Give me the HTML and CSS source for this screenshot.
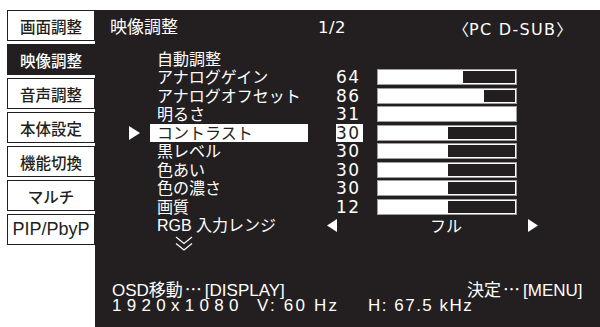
FILE: index.html
```html
<!DOCTYPE html>
<html lang="ja">
<head>
<meta charset="utf-8">
<title>映像調整</title>
<link rel="stylesheet" href="styles.css">
</head>
<body>
<div class="screen">
  <nav class="tabs">
    <div class="tab">画面調整</div>
    <div class="tab active">映像調整</div>
    <div class="tab">音声調整</div>
    <div class="tab">本体設定</div>
    <div class="tab">機能切換</div>
    <div class="tab">マルチ</div>
    <div class="tab latin">PIP/PbyP</div>
  </nav>
  <main class="panel">
    <header class="head">
      <span class="title">映像調整</span>
      <span class="page">1/2</span>
      <span class="src"><span class="br">〈</span>PC D-SUB<span class="br">〉</span></span>
    </header>
    <ul class="list">
      <li class="row"><span class="mark"></span><span class="label">自動調整</span></li>
      <li class="row"><span class="mark"></span><span class="label">アナログゲイン</span><span class="val">64</span><span class="bar"><span class="fill" style="width:61.5%"></span><span class="rest"></span></span></li>
      <li class="row"><span class="mark"></span><span class="label">アナログオフセット</span><span class="val">86</span><span class="bar"><span class="fill" style="width:77%"></span><span class="rest"></span></span></li>
      <li class="row"><span class="mark"></span><span class="label">明るさ</span><span class="val">31</span><span class="bar"><span class="fill" style="width:100%"></span><span class="rest"></span></span></li>
      <li class="row sel"><span class="mark"><svg class="arrow" width="11" height="14" viewBox="0 0 11 14"><polygon points="0,0 11,7 0,14" fill="#fff"/></svg></span><span class="label">コントラスト</span><span class="val">30</span><span class="bar"><span class="fill" style="width:51%"></span><span class="rest"></span></span></li>
      <li class="row"><span class="mark"></span><span class="label">黒レベル</span><span class="val">30</span><span class="bar"><span class="fill" style="width:51%"></span><span class="rest"></span></span></li>
      <li class="row"><span class="mark"></span><span class="label">色あい</span><span class="val">30</span><span class="bar"><span class="fill" style="width:51%"></span><span class="rest"></span></span></li>
      <li class="row"><span class="mark"></span><span class="label">色の濃さ</span><span class="val">30</span><span class="bar"><span class="fill" style="width:51%"></span><span class="rest"></span></span></li>
      <li class="row"><span class="mark"></span><span class="label">画質</span><span class="val">12</span><span class="bar"><span class="fill" style="width:51%"></span><span class="rest"></span></span></li>
      <li class="row"><span class="mark"></span><span class="label">RGB 入力レンジ</span>
        <span class="range">
          <svg class="tri" width="10" height="13" viewBox="0 0 10 13"><polygon points="10,0 0,6.5 10,13" fill="#fff"/></svg>
          <span class="opt">フル</span>
          <svg class="tri right" width="10" height="13" viewBox="0 0 10 13"><polygon points="0,0 10,6.5 0,13" fill="#fff"/></svg>
        </span>
      </li>
      <li class="row more"><svg width="18" height="16" viewBox="0 0 18 16"><polyline points="1,1 9,7.5 17,1" fill="none" stroke="#fff" stroke-width="1.2"/><polyline points="1,7.5 9,14 17,7.5" fill="none" stroke="#fff" stroke-width="1.2"/></svg></li>
    </ul>
    <footer class="foot">
      <div class="line">
        <span class="k1">OSD移動<span class="dots">⋯</span>[DISPLAY]</span>
        <span>決定<span class="dots">⋯</span>[MENU]</span>
      </div>
      <div class="line">
        <span class="res">1920x1080</span>
        <span class="vf">V: 60 Hz</span>
        <span class="hf">H: 67.5 kHz</span>
      </div>
    </footer>
  </main>
</div>
</body>
</html>
```
FILE: styles.css
```css
html, body {
  margin: 0;
  padding: 0;
  background: #fff;
}
body {
  font-family: "Liberation Sans", "Noto Sans CJK JP", sans-serif;
  color: #231f20;
}
.screen {
  width: 600px;
  height: 327px;
  overflow: hidden;
  display: flex;
  align-items: flex-start;
}
.tabs {
  width: 88px;
  padding: 10px 0 0 7px;
  display: flex;
  flex-direction: column;
  gap: 3px;
}
.tab {
  box-sizing: border-box;
  height: 31px;
  border: 1px solid #231f20;
  background: #fff;
  display: flex;
  align-items: center;
  justify-content: center;
  font-size: 15.5px;
  font-weight: 500;
  white-space: nowrap;
}
.tab.active {
  background: #231f20;
  color: #fff;
}
.tab.latin {
  font-size: 18px;
  font-weight: 400;
}
.panel {
  width: 505px;
  height: 317px;
  margin-top: 10px;
  background: #231f20;
  color: #fff;
}
.head {
  height: 39.5px;
  box-sizing: border-box;
  padding: 9px 0 0 15px;
  display: flex;
  line-height: 18px;
  white-space: nowrap;
}
.title {
  width: 208px;
  font-size: 17px;
}
.page {
  width: 135px;
  font-family: "DejaVu Sans", sans-serif;
  font-size: 16.5px;
  letter-spacing: 0.5px;
}
.src {
  font-family: "DejaVu Sans", "Noto Sans CJK JP", sans-serif;
  font-size: 16px;
  letter-spacing: 1.3px;
}
.src .br {
  font-family: "Noto Sans CJK JP", sans-serif;
  letter-spacing: 0;
}
.list {
  list-style: none;
  margin: 0;
  padding: 0;
}
.row {
  height: 18.5px;
  display: flex;
  align-items: center;
  font-size: 16px;
  white-space: nowrap;
}
.mark {
  box-sizing: border-box;
  width: 55px;
  padding-left: 34px;
  display: flex;
  align-items: center;
}
.label {
  box-sizing: border-box;
  width: 158px;
  height: 18.5px;
  line-height: 19.5px;
  padding-left: 7px;
}
.val {
  width: 27px;
  height: 18.5px;
  line-height: 19px;
  margin-left: 28px;
  font-family: "DejaVu Sans", sans-serif;
  font-size: 17px;
  letter-spacing: 1.5px;
}
.row.sel .label,
.row.sel .val {
  background: #fff;
  color: #231f20;
}
.bar {
  box-sizing: border-box;
  width: 140px;
  height: 16px;
  margin-left: 14px;
  padding: 1px;
  border: 1px solid #9d9d9d;
  background: #fff;
  display: flex;
}
.fill {
  height: 100%;
}
.rest {
  flex: 1;
  background: #231f20;
}
.range {
  margin-left: 19px;
  display: flex;
  align-items: center;
}
.opt {
  margin-left: 93px;
  font-size: 16px;
}
.tri.right {
  margin-left: 66px;
}
.row.more {
  padding-left: 80px;
}
.foot {
  margin-top: 27px;
  padding-left: 17px;
  font-size: 17px;
}
.line {
  display: flex;
  height: 17px;
  line-height: 17px;
  white-space: nowrap;
}
.dots {
  font-family: "Noto Sans CJK JP", sans-serif;
  margin: 0 3px 0 2px;
}
.k1 {
  width: 355px;
}
.res {
  width: 145px;
  letter-spacing: 5.3px;
}
.vf {
  width: 111px;
  letter-spacing: 2.2px;
}
.hf {
  letter-spacing: 1.5px;
}
```
